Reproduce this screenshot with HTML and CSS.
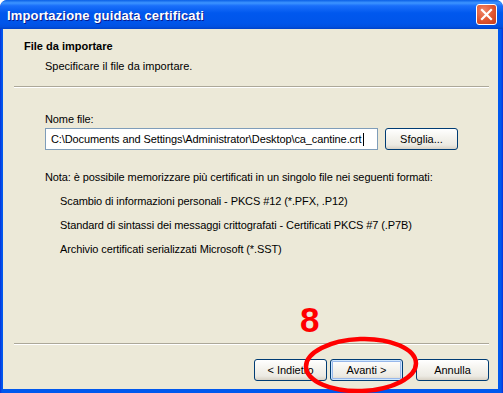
FILE: index.html
```html
<!DOCTYPE html>
<html lang="it">
<head>
    <meta charset="UTF-8">
    <title>Importazione guidata certificati</title>
    <link rel="stylesheet" href="styles.css">
</head>
<body>
    <div class="window">
        <div class="titlebar">
            <span class="title">Importazione guidata certificati</span>
            <span class="close-btn">
                <svg width="13" height="13" viewBox="0 0 13 13">
                    <path d="M2 2 L11 11 M11 2 L2 11" stroke="#fff" stroke-width="2.2" stroke-linecap="square"/>
                </svg>
            </span>
        </div>

        <div class="frame">
            <div class="header">
                <div class="header-title">File da importare</div>
                <div class="header-sub">Specificare il file da importare.</div>
            </div>
            <div class="separator"></div>

            <div class="content">
                <label class="field-label" for="fileName">Nome file:</label>
                <div class="file-row">
                    <div class="textbox" id="fileName"><span class="caret">C:\Documents and Settings\Administrator\Desktop\ca_cantine.crt</span></div>
                    <button class="btn">Sfoglia...</button>
                </div>

                <p class="note">Nota: è possibile memorizzare più certificati in un singolo file nei seguenti formati:</p>
                <ul class="formats">
                    <li>Scambio di informazioni personali - PKCS #12 (*.PFX, .P12)</li>
                    <li>Standard di sintassi dei messaggi crittografati - Certificati PKCS #7 (.P7B)</li>
                    <li>Archivio certificati serializzati Microsoft (*.SST)</li>
                </ul>
            </div>

            <div class="separator"></div>
            <div class="buttons">
                <button class="btn">&lt; Indietro</button>
                <button class="btn btn-default">Avanti &gt;</button>
                <button class="btn btn-cancel">Annulla</button>
            </div>
        </div>

        <!-- annotazione a mano sopra lo screenshot -->
        <div class="step-number">8</div>
        <svg class="circle-mark" width="130" height="64" viewBox="0 0 130 64">
            <ellipse cx="63" cy="33" rx="55" ry="26" fill="none" stroke="#ff0000" stroke-width="4.5" transform="rotate(-2 63 33)"/>
        </svg>
    </div>
</body>
</html>
```

FILE: styles.css
```css
body {
    margin: 0;
    background-color: #fff;
    font-family: "Liberation Sans", Arial, sans-serif;
    font-size: 11px;
}

.window {
    position: relative;
    width: 503px;
    height: 393px;
    display: flex;
    flex-direction: column;
    overflow: hidden;
    border-radius: 7px 7px 0 0;
    background: linear-gradient(to right, #0831d9, #0058ee 2px, #0058ee calc(100% - 2px), #0831d9);
}

.titlebar {
    height: 29px;
    flex-shrink: 0;
    display: flex;
    align-items: center;
    justify-content: space-between;
    padding: 0 6px 0 7px;
    border-radius: 7px 7px 0 0;
    background: linear-gradient(to bottom, #0a5fe6 0%, #3d95ff 10%, #1a6ffa 20%, #0058ee 45%, #0055ea 80%, #0150e0 92%, #0042c8 100%);
}

.title {
    color: #fff;
    font-weight: bold;
    font-size: 13px;
    letter-spacing: 0.15px;
    text-shadow: 1px 1px 0 #0a1a8c;
    margin-top: 1px;
}

.close-btn {
    width: 19px;
    height: 19px;
    display: flex;
    align-items: center;
    justify-content: center;
    border: 1px solid #fff;
    border-radius: 3px;
    background: radial-gradient(circle at 35% 30%, #f0876a, #e0542e 55%, #c43c1c);
}

.frame {
    flex: 1;
    display: flex;
    flex-direction: column;
    margin: 0 5px 4px 3px;
    background-color: #ece9d8;
    color: #000;
}

.header {
    height: 57px;
    box-sizing: border-box;
    padding: 11px 0 0 21px;
    line-height: 13px;
}

.header-title {
    font-weight: bold;
}

.header-sub {
    margin: 7px 0 0 21px;
}

.separator {
    height: 1px;
    margin: 0 9px 0 11px;
    background-color: #aca899;
    border-bottom: 1px solid #fff;
}

.content {
    flex: 1;
    padding: 25px 0 0 42px;
    line-height: 13px;
    letter-spacing: -0.1px;
}

.field-label {
    display: block;
}

.file-row {
    display: flex;
    align-items: center;
    gap: 7px;
    margin-top: 2px;
}

.textbox {
    width: 323px;
    height: 20px;
    padding: 0 3px 0 5px;
    display: flex;
    align-items: center;
    background-color: #fff;
    border: 1px solid #7f9db9;
    white-space: nowrap;
}

.caret {
    border-right: 1px solid #000;
    padding-right: 1px;
}

.btn {
    width: 73px;
    height: 22px;
    padding: 0;
    font-family: inherit;
    font-size: 11px;
    letter-spacing: 0;
    color: #000;
    border: 1px solid #003c74;
    border-radius: 3px;
    background: linear-gradient(to bottom, #ffffff 0%, #f5f4ef 40%, #eceae3 80%, #d8d2c6 100%);
}

.btn-default {
    box-shadow: inset 0 0 0 1px #cee7ff, inset 0 0 0 2px #98b8ea;
}

.note {
    margin: 21px 0 0;
}

.formats {
    list-style: none;
    margin: 11px 0 0;
    padding-left: 15px;
}

.formats li {
    margin-bottom: 11px;
}

.buttons {
    display: flex;
    justify-content: flex-end;
    gap: 3px;
    padding: 14px 9px 8px 0;
}

.btn-cancel {
    margin-left: 10px;
}

.step-number {
    position: absolute;
    left: 300px;
    top: 302px;
    font-size: 35px;
    line-height: 1;
    font-weight: bold;
    color: #ff0000;
}

.circle-mark {
    position: absolute;
    left: 298px;
    top: 332px;
}
```
